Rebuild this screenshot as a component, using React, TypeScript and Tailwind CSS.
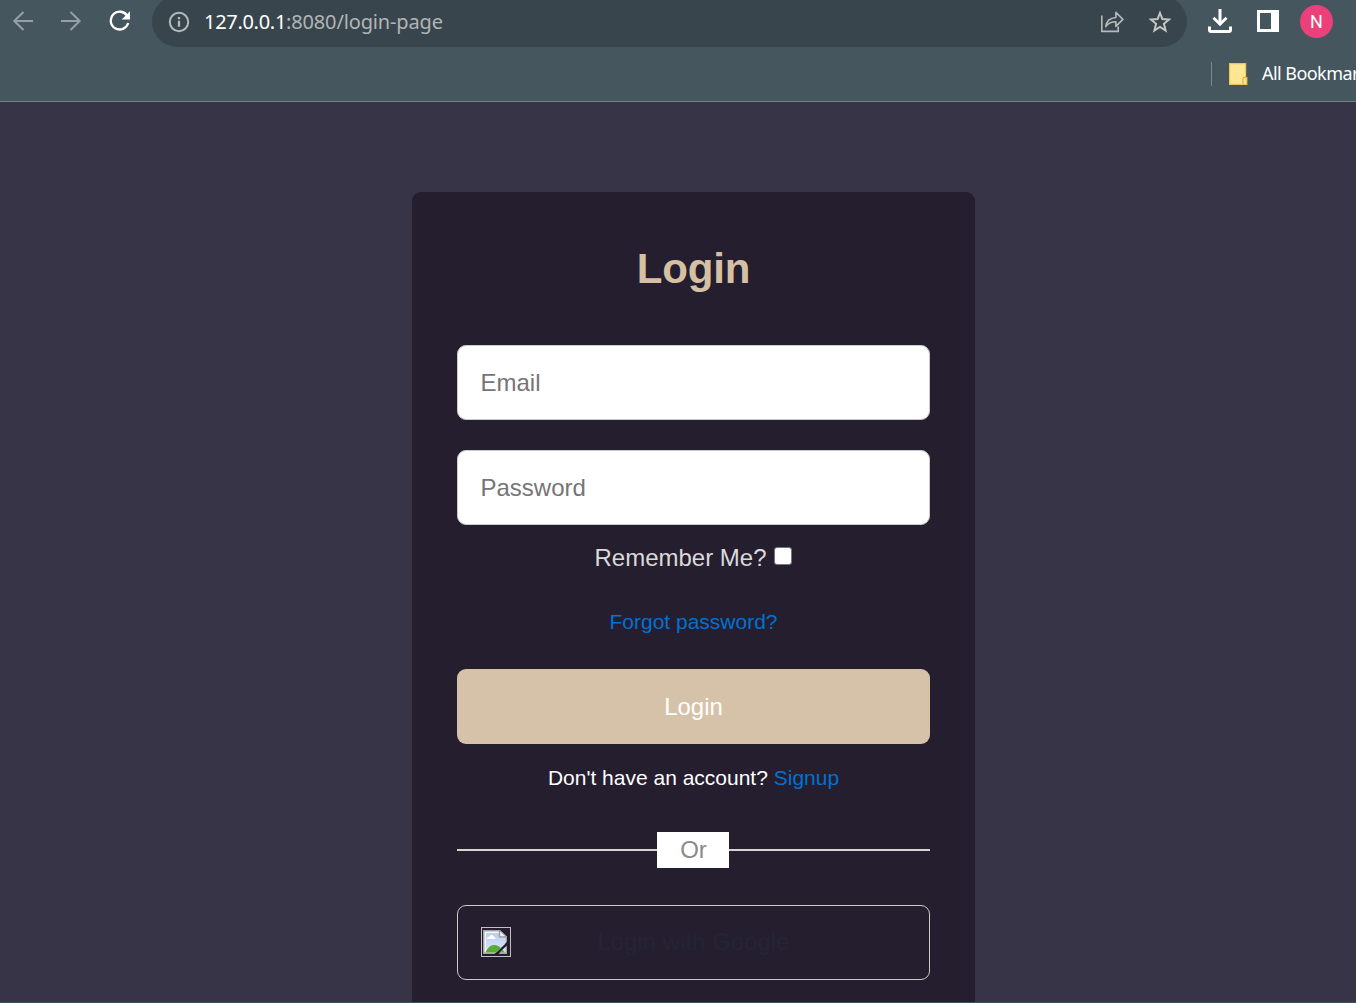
import React from "react";

function BackIcon({ className = "" }: { className?: string }) {
  return (
    <svg className={className} width="22" height="22" viewBox="0 0 22 22" fill="none" stroke="#95a0a5" strokeWidth="2">
      <path d="M21 11H2.500M11.500 2L2.300 11l9.200 9" />
    </svg>
  );
}

function ReloadIcon() {
  return (
    <svg width="22" height="22" viewBox="0 0 22 22" className="-mt-px ml-[27px]" fill="none">
      <path d="M18.4 6.2A8.900 8.900 0 1 0 19.200 13" stroke="#fff" strokeWidth="2.300" />
      <path d="M21 1.200v8.300h-8.300z" fill="#fff" />
    </svg>
  );
}

function InfoIcon() {
  return (
    <svg width="22" height="22" viewBox="0 0 22 22" fill="none">
      <circle cx="11" cy="11" r="9.200" stroke="#b4babd" strokeWidth="2" />
      <path d="M11 9.800v6M11 6v2.200" stroke="#b4babd" strokeWidth="2.300" />
    </svg>
  );
}

function ShareIcon() {
  return (
    <svg width="24" height="24" viewBox="0 0 24 24" fill="none" stroke="#b6babb" strokeWidth="1.600">
      <path d="M1.800 5.600v15.800h16.400v-4.800" />
      <path d="M5.800 16.700c.6-5.800 3.400-8.700 10.100-9.200V2.400l7 7-7 7v-4.600c-4.600 0-7.800 1.500-10.100 4.800z" strokeLinejoin="round" />
    </svg>
  );
}

function StarIcon() {
  return (
    <svg width="24" height="24" viewBox="0 0 24 24" className="ml-[24px]" fill="none" stroke="#c6c6c4" strokeWidth="2">
      <path d="M12 3l2.400 6.100 6.600.5-5.100 4.200 1.700 6.700-5.600-3.600-5.600 3.600 1.700-6.700L3 9.600l6.600-.5z" />
    </svg>
  );
}

function DownloadIcon() {
  return (
    <svg width="26" height="26" viewBox="0 0 26 26" className="-mt-px ml-[20px]" fill="none" stroke="#fff" strokeWidth="3">
      <path d="M13 1v14M6.500 9.700l6.500 6.500 6.500-6.500" />
      <path d="M2.500 18.500v3.300c0 .9.6 1.700 1.600 1.700h17.800c1 0 1.600-.8 1.600-1.700v-3.300" />
    </svg>
  );
}

function PanelIcon() {
  return (
    <svg width="22" height="22" viewBox="0 0 22 22" className="-mt-px ml-[24px]">
      <path fill="#fff" fillRule="evenodd" d="M0 0h22v22H0zM3 3v16h11V3z" />
    </svg>
  );
}

function FolderIcon() {
  return (
    <svg width="19" height="22" viewBox="0 0 19 22" className="ml-[17px]">
      <path d="M.6.6h16v14h1.200v6.800H.6z" fill="#ffe694" stroke="#ecc94f" strokeWidth="1.200" />
      <path d="M14 21v-5.300c0-.8.6-1.200 1.200-1.200h1.800" fill="none" stroke="#dfb93c" strokeWidth="1.300" />
    </svg>
  );
}

function BrokenImage() {
  return (
    <svg width="24" height="24" viewBox="0 0 24 24">
      <defs>
        <linearGradient id="sky" x1="0" y1="0" x2="0" y2="1">
          <stop offset="0" stopColor="#bccdf2" />
          <stop offset="1" stopColor="#dce7fb" />
        </linearGradient>
        <clipPath id="sheet">
          <path d="M0 0h17l7 6.500v5.300L11.500 24H0zM24 15.500V24h-8.500z" />
        </clipPath>
      </defs>
      <g clipPath="url(#sheet)">
        <path d="M0 0h17l7 6.500V24H0z" fill="#a5a5a7" />
        <path d="M1.500 1.500h15l6 6v15h-21z" fill="#f6f8fc" />
        <path d="M3 3h13v5h6v14H3z" fill="url(#sky)" />
        <path d="M4 9c0-1.700 1.300-2.200 2.400-2.200C6.700 4.800 10 4.400 10.600 6.500c1.400.2 2 1 2 2.500z" fill="#fff" />
        <path d="M2.500 22.500c2-5 5-7.500 9-7.500s7 3 10.500 7.500z" fill="#5aac35" />
        <path d="M16.500 0v7H24z" fill="#efefef" stroke="#9b9b9f" strokeWidth="1.300" />
      </g>
    </svg>
  );
}

function Browser() {
  return (
    <header className="h-[102px] shrink-0 overflow-hidden border-b border-[#73808a] bg-[#45565f] font-['Noto_Sans','Open_Sans',sans-serif]">
      <div className="flex h-[43px] w-[1356px] items-center pl-3">
        <BackIcon className="-mt-[2px]" />
        <BackIcon className="-mt-[2px] ml-[26px] rotate-180" />
        <ReloadIcon />
        <div className="-mt-px ml-[21px] flex h-[51px] w-[1035px] shrink-0 items-center rounded-full bg-[#39454c] pl-[16px] pt-[2px]">
          <InfoIcon />
          <div className="ml-[14px] flex-1 text-[20px] leading-[28px] tracking-[-0.15px] text-[#b0b5b7]">
            <span className="tracking-[-0.3px] text-white">127.0.0.1</span>:8080/login-page
          </div>
          <div className="flex items-center pr-[15px]">
            <ShareIcon />
            <StarIcon />
          </div>
        </div>
        <DownloadIcon />
        <PanelIcon />
        <div className="ml-[21px] flex size-[33px] items-center justify-center rounded-full bg-[#ec407a] font-[Roboto] text-[18px] text-white">
          N
        </div>
      </div>
      <div className="flex h-[62px] items-center pl-[1211px]">
        <div className="h-6 w-px shrink-0 bg-[#7b8990]" />
        <div className="shrink-0"><FolderIcon /></div>
        <span className="-mt-[2px] ml-[14px] whitespace-nowrap text-[18px] tracking-[-0.55px] text-white">All Bookmarks</span>
      </div>
    </header>
  );
}

export default function App() {
  return (
    <div className="flex h-[1003px] w-[1356px] flex-col overflow-hidden border-b border-[#36535c] bg-[#383447] font-['Liberation_Sans',Arial,sans-serif]">
      <Browser />
      <main className="ml-[412px] mt-[90px] h-[811px] w-[563px] shrink-0 rounded-t-[9px] bg-[#251e2e] px-[45px] text-center">
        <h1 className="pt-[53px] text-[42px] font-bold leading-[48px] tracking-[-0.2px] text-[#d6c0a4]">Login</h1>
        <form className="mt-[52px]" onSubmit={(e) => e.preventDefault()}>
          <input
            type="email"
            placeholder="Email"
            className="block h-[75px] w-full rounded-[9px] border border-[#cacaca] bg-white pl-[22.5px] pr-[23px] text-2xl placeholder:text-[#757575]"
          />
          <input
            type="password"
            placeholder="Password"
            className="mt-[30px] block h-[75px] w-full rounded-[9px] border border-[#cacaca] bg-white pl-[22.5px] pr-[23px] text-2xl placeholder:text-[#757575]"
          />
          <label className="mt-[19px] flex h-[28px] items-center justify-center text-2xl leading-[28px] text-[#dadada]">
            Remember Me?
            <input type="checkbox" className="mb-[4px] ml-[7px] mr-px size-[18px] appearance-none rounded-[3px] border border-[#767676] bg-white" />
          </label>
          <a href="#" className="mt-[38px] block text-[21px] leading-[24px] text-[#0171d3]">Forgot password?</a>
          <button className="mt-[35px] h-[75px] w-full rounded-[9px] bg-[#d6c2a8] text-2xl text-white">Login</button>
        </form>
        <p className="mt-[22px] text-[21px] leading-[24px] text-white">
          Don't have an account? <a href="#" className="text-[#0171d3]">Signup</a>
        </p>
        <div className="mt-[42px] flex h-[36px] items-center">
          <div className="h-[2px] w-[200px] bg-[#d4d4d4]" />
          <span className="h-[36px] w-[72px] bg-white pl-px text-2xl leading-[36px] text-[#8b8b8b]">Or</span>
          <div className="h-[2px] flex-1 bg-[#d4d4d4]" />
        </div>
        <button className="mt-[37px] flex h-[75px] w-full items-center rounded-[9px] border border-[#cacaca] px-[23px] pb-[2px] text-2xl text-[#232534]">
          <span className="flex size-[30px] items-center border border-[#c0c0c0] pl-px">
            <BrokenImage />
          </span>
          <span className="flex-1 pr-[30px]">Login with Google</span>
        </button>
      </main>
    </div>
  );
}
